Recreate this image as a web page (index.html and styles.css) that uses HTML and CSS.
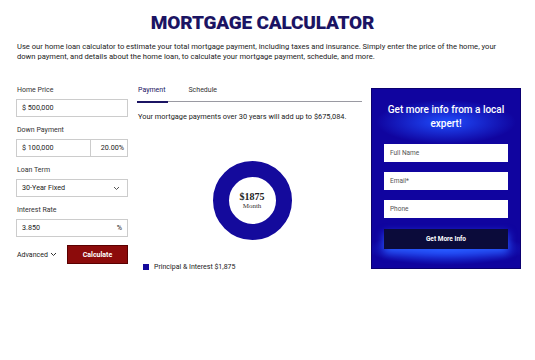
FILE: index.html
```html
<!DOCTYPE html>
<html>
<head>
<meta charset="utf-8">
<link rel="stylesheet" href="styles.css">
</head>
<body>
<div class="page">
  <h1 class="title">MORTGAGE CALCULATOR</h1>
  <p class="intro">Use our home loan calculator to estimate your total mortgage payment, including taxes and insurance. Simply enter the price of the home, your down payment, and details about the home loan, to calculate your mortgage payment, schedule, and more.</p>
  <div class="main">
    <div class="form">
      <div class="label">Home Price</div>
      <div class="field">$ 500,000</div>
      <div class="label">Down Payment</div>
      <div class="split">
        <div class="field grow">$ 100,000</div>
        <div class="field pct">20.00%</div>
      </div>
      <div class="label">Loan Term</div>
      <div class="field select"><span>30-Year Fixed</span><svg class="chev" width="7" height="5" viewBox="0 0 7 5"><path d="M1 1l2.5 2.5L6 1" fill="none" stroke="#555" stroke-width="1"/></svg></div>
      <div class="label">Interest Rate</div>
      <div class="field select"><span>3.850</span><span class="unit">%</span></div>
      <div class="actions">
        <div class="adv">Advanced <svg width="7" height="5" viewBox="0 0 7 5"><path d="M1 1l2.5 2.5L6 1" fill="none" stroke="#333" stroke-width="1"/></svg></div>
        <div class="calc">Calculate</div>
      </div>
    </div>
    <div class="results">
      <div class="tabs">
        <div class="tab active">Payment</div>
        <div class="tab">Schedule</div>
      </div>
      <p class="total">Your mortgage payments over 30 years will add up to $675,084.</p>
      <div class="chart">
        <div class="donut">
          <div class="amt">$1875</div>
          <div class="per">Month</div>
        </div>
      </div>
      <div class="legend"><span class="sw"></span>Principal &amp; Interest $1,875</div>
    </div>
    <div class="panel">
      <div class="ptitle">Get more info from a local<br>expert!</div>
      <div class="pin">Full Name</div>
      <div class="pin">Email*</div>
      <div class="pin">Phone</div>
      <div class="pbtn">Get More Info</div>
    </div>
  </div>
</div>
</body>
</html>
```
FILE: styles.css
```css
* { box-sizing: border-box; }
html, body { margin: 0; padding: 0; background: #fff; }
body { font-family: "Roboto", "Noto Sans", sans-serif; color: #222; width: 535px; height: 360px; overflow: hidden; }
.page { padding: 11px 13px 0 17px; }
.title { margin: 0; text-align: center; font-size: 19px; font-weight: 900; color: #1b1463; letter-spacing: -0.2px; line-height: 24px; padding-right: 14px; }
.intro { margin: 7px 0 0 0; font-size: 7.6px; line-height: 10px; color: #222; width: 495px; }
.main { display: grid; grid-template-columns: 112px 225px 150px; column-gap: 9px; margin-top: 21px; margin-left: -1px; }
.form { display: flex; flex-direction: column; }
.label { font-size: 7px; color: #333; line-height: 9px; margin-top: 3px; height: 9px; padding-left: 1px; }
.field { height: 18px; border: 1px solid #ccc; font-size: 7.2px; line-height: 16px; padding: 0 5px; color: #222; margin-top: 4px; margin-bottom: 6px; background: #fff; }
.split { display: flex; }
.grow { flex: 1; border-right: none; }
.pct { width: 38px; padding: 0 3px; text-align: right; }
.select { display: flex; justify-content: space-between; align-items: center; }
.chev { margin-right: 2px; }
.actions { display: flex; justify-content: space-between; align-items: center; margin-top: 2px; }
.adv { font-size: 7px; display: flex; align-items: center; gap: 2px; padding-left: 1px; }
.calc { width: 61px; height: 19px; background: #8c0b0b; color: #fff; font-size: 7px; font-weight: 700; display: flex; align-items: center; justify-content: center; border: 1px solid #5a0000; }
.results { display: flex; flex-direction: column; }
.tabs { display: flex; border-bottom: 1.5px solid #9a9aa2; height: 19px; margin-top: 0; }
.tab { font-size: 7px; color: #333; padding: 3px 1px 0 1px; margin-right: 19px; }
.tab.active { color: #1b1463; border-bottom: 2px solid #1b1463; margin-bottom: -1.5px; padding-right: 3px; }
.total { margin: 10px 0 0 1px; font-size: 7.4px; color: #222; line-height: 10px; white-space: nowrap; }
.chart { display: flex; justify-content: center; margin-top: 39px; padding-left: 5px; }
.donut { width: 79px; height: 79px; border-radius: 50%; border: 16px solid #140a9c; display: flex; flex-direction: column; align-items: center; justify-content: center; font-family: "Liberation Serif", serif; }
.amt { font-size: 10px; font-weight: 700; color: #222; line-height: 11px; }
.per { font-size: 7px; color: #333; line-height: 8px; }
.legend { display: flex; align-items: center; font-size: 7px; color: #222; margin-top: 23px; padding-left: 6px; }
.sw { width: 6px; height: 6px; background: #140a9c; margin-right: 5px; }
.panel { margin-top: 5px; height: 181px; background: radial-gradient(ellipse 70px 22px at 50% 33px, #1f4dff 0%, rgba(31,77,255,0) 100%), radial-gradient(ellipse 80px 16px at 50% 160px, #1f4dff 0%, rgba(31,77,255,0) 100%), #10049f; padding: 14px 12px 0 12px; display: flex; flex-direction: column; border: 1px solid #0b0070; }
.ptitle { color: #fff; font-size: 10px; font-weight: 500; text-align: center; line-height: 14px; margin-bottom: 13px; white-space: nowrap; }
.pin { height: 18px; background: #fff; font-size: 6.5px; color: #555; padding: 0 6px; line-height: 18px; margin-bottom: 10px; }
.pbtn { height: 20px; background: #0b0b3a; color: #fff; font-size: 6.5px; font-weight: 700; display: flex; align-items: center; justify-content: center; margin-top: 1px; box-shadow: 0 4px 8px #2a5cff; }
```
